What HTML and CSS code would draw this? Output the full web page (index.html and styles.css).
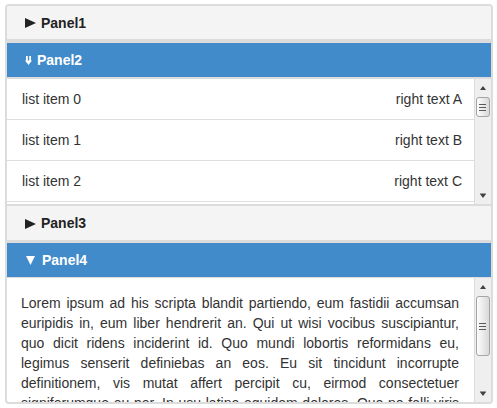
FILE: index.html
```html
<!DOCTYPE html>
<html lang="en">
<head>
<meta charset="utf-8">
<title>Accordion</title>
<link rel="stylesheet" href="styles.css">
</head>
<body>
<div class="accordion">
  <div class="hdr hdr-first"><svg class="ico-right" width="11" height="10" viewBox="0 0 11 10"><path d="M0 0L11 5L0 10z" fill="#222"/></svg>Panel1</div>
  <div class="hdr hdr-open hdr-list"><svg class="ico-dbl" width="7" height="9" viewBox="0 0 7 9"><rect x="1" y="0" width="1.8" height="5" fill="#fff"/><rect x="4.2" y="0" width="1.8" height="5" fill="#fff"/><path d="M0 4.5H7L3.5 9z" fill="#fff"/></svg>Panel2</div>
  <div class="pane pane-list">
    <ul class="list">
      <li class="row"><span>list item 0</span><span>right text A</span></li>
      <li class="row"><span>list item 1</span><span>right text B</span></li>
      <li class="row"><span>list item 2</span><span>right text C</span></li>
    </ul>
    <div class="sbar">
      <div class="sb-btn sb-up"></div>
      <div class="sb-track"><div class="sb-thumb" style="height: 20px"></div></div>
      <div class="sb-btn sb-down"></div>
    </div>
  </div>
  <div class="hdr"><svg class="ico-right" width="11" height="10" viewBox="0 0 11 10"><path d="M0 0L11 5L0 10z" fill="#222"/></svg>Panel3</div>
  <div class="hdr hdr-open hdr-text"><svg class="ico-down" width="9" height="9" viewBox="0 0 9 9"><path d="M0 0H9L4.5 9z" fill="#fff"/></svg>Panel4</div>
  <div class="pane pane-text">
    <div class="text-body">
      <p>Lorem ipsum ad his scripta blandit partiendo, eum fastidii accumsan euripidis in, eum liber hendrerit an. Qui ut wisi vocibus suscipiantur, quo dicit ridens inciderint id. Quo mundi lobortis reformidans eu, legimus senserit definiebas an eos. Eu sit tincidunt incorrupte definitionem, vis mutat affert percipit cu, eirmod consectetuer signiferumque eu per. In usu latine equidem dolores. Quo no falli viris intellegam, ut fugit veritus placerat per.</p>
    </div>
    <div class="sbar">
      <div class="sb-btn sb-up"></div>
      <div class="sb-track"><div class="sb-thumb" style="height: 60px"></div></div>
      <div class="sb-btn sb-down"></div>
    </div>
  </div>
</div>
</body>
</html>
```

FILE: styles.css
```css
html, body {
  margin: 0;
  background: #fff;
}

body {
  padding: 4px 0 0 5px;
}

.accordion {
  width: 488px;
  height: 400px;
  box-sizing: border-box;
  border: 2px solid #dcdcdc;
  border-radius: 4px;
  display: flex;
  flex-direction: column;
  overflow: hidden;
  font: 14px "Liberation Sans", Arial, sans-serif;
  color: #333;
}

.hdr {
  flex: none;
  height: 34px;
  display: flex;
  align-items: center;
  padding-left: 18px;
  font-weight: bold;
  background: #f4f4f4;
  color: #222;
  border-bottom: 3px solid #dcdcdc;
}

.hdr-first {
  height: 33px;
  border-bottom-width: 4px;
}

.hdr-open {
  background: #428bca;
  color: #fff;
}

.hdr-list {
  border-bottom-width: 2px;
}

.hdr-text {
  border-bottom-width: 1px;
}

.ico-right {
  margin-right: 5px;
  margin-top: 1px;
}

.ico-dbl {
  margin-right: 5px;
  margin-top: 1px;
}

.ico-down {
  margin-left: 1px;
  margin-right: 7px;
  margin-top: 1px;
}

.pane {
  display: flex;
  overflow: hidden;
}

.pane-list {
  flex: none;
  height: 125px;
  border-bottom: 2px solid #dcdcdc;
}

.pane-text {
  flex: 1;
  min-height: 0;
}

.list {
  flex: 1;
  margin: 0;
  padding: 0;
  list-style: none;
  overflow: hidden;
}

.row {
  height: 40px;
  border-bottom: 1px solid #dedede;
  display: flex;
  justify-content: space-between;
  align-items: center;
  padding: 0 12px 0 15px;
}

.text-body {
  flex: 1;
  overflow: hidden;
  padding: 15px 15px 0 14px;
}

.text-body p {
  margin: 0;
  line-height: 20px;
  text-align: justify;
}

.sbar {
  flex: none;
  width: 16px;
  border-left: 1px solid #dcdcdc;
  background: #efefef;
  display: flex;
  flex-direction: column;
}

.sb-btn {
  flex: none;
  height: 17px;
  display: flex;
  align-items: center;
  justify-content: center;
}

.sb-up::before {
  content: "";
  border-left: 3.5px solid transparent;
  border-right: 3.5px solid transparent;
  border-bottom: 4px solid #404040;
}

.sb-down::before {
  content: "";
  border-left: 3.5px solid transparent;
  border-right: 3.5px solid transparent;
  border-top: 4px solid #404040;
  box-shadow: 0 -1px 0 #9a9a9a;
}

.sb-track {
  flex: 1;
  padding: 1px 1px 0 1px;
}

.sb-thumb {
  box-sizing: border-box;
  border: 1px solid #a4a4a4;
  border-radius: 3px;
  background-image:
    linear-gradient(#5a5a5a, #5a5a5a),
    linear-gradient(#5a5a5a, #5a5a5a),
    linear-gradient(#5a5a5a, #5a5a5a),
    linear-gradient(to right, #fdfdfd, #d8d8d8);
  background-size: 7px 1px, 7px 1px, 7px 1px, 100% 100%;
  background-position: 2px calc(50% - 3px), 2px 50%, 2px calc(50% + 3px), 0 0;
  background-repeat: no-repeat;
}
```
